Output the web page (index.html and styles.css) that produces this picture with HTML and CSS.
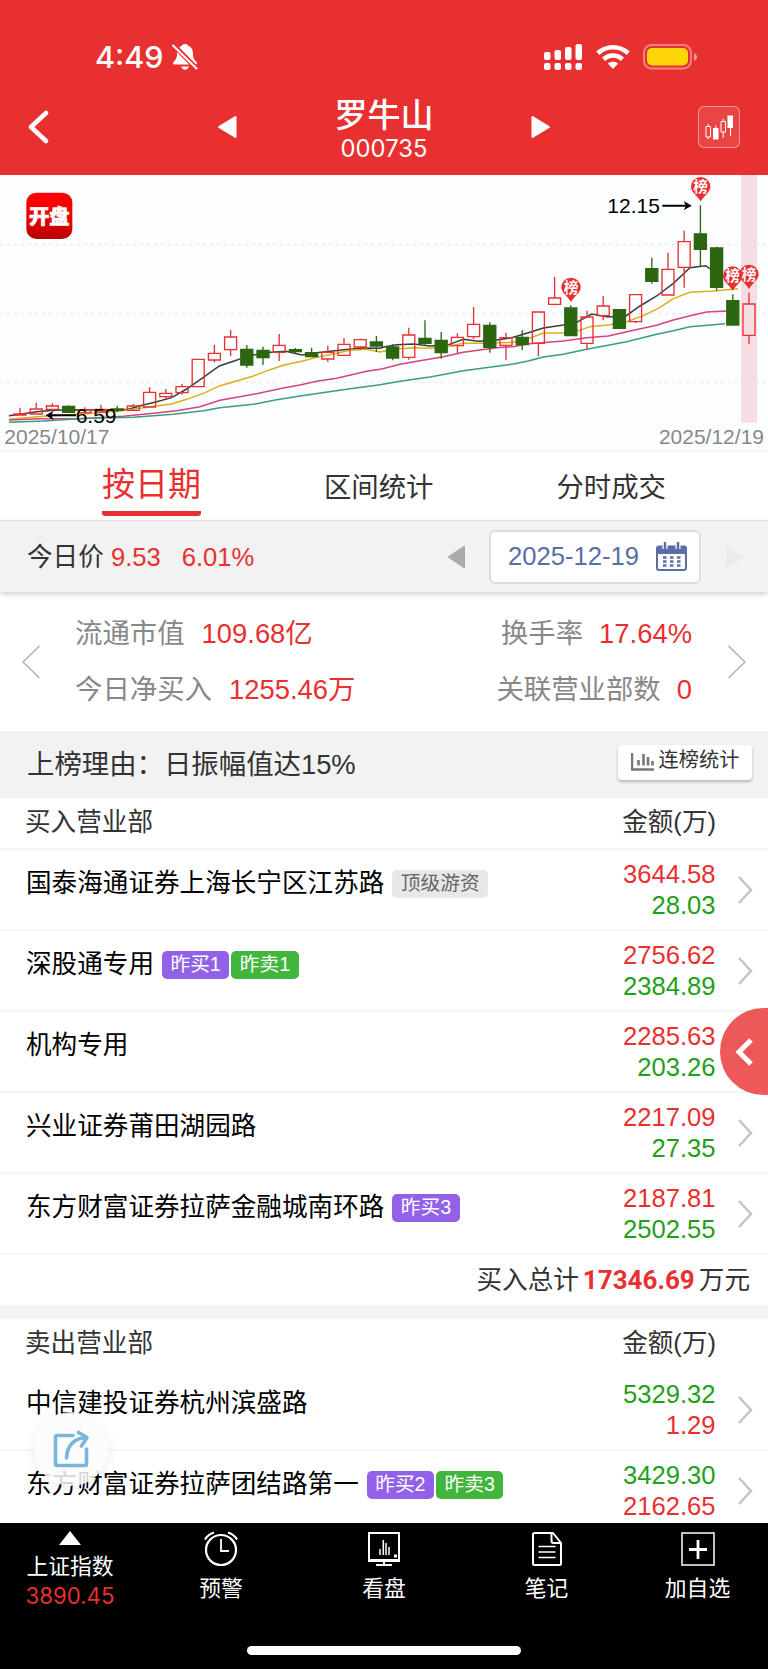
FILE: index.html
```html
<!DOCTYPE html>
<html lang="zh">
<head>
    <meta charset="UTF-8">
    <meta name="viewport" content="width=device-width, initial-scale=1.0">
    <title>罗牛山 000735</title>
    <link rel="stylesheet" href="styles.css">
</head>
<body>
    <div class="top">
        <div class="status-bar">
            <div class="status-left">
                <span class="clock">4:49</span>
                <svg width="26" height="28" viewBox="0 0 26 28">
                    <path d="M13 1c-1.900 0-3 .8-3.500 2.100C6 4.500 5 7.500 5 11c0 4-1 5.500-3.500 8-1 1.200-.5 2.500 1 2.500h21c1.500 0 2-1.300 1-2.500-2.500-2.500-3.500-4-3.500-8 0-3.500-1-6.500-4.500-7.900C16 1.800 14.900 1 13 1z" fill="#fff"/>
                    <path d="M9 23.500h8c-.6 2-2.100 3.200-4 3.200s-3.400-1.200-4-3.200z" fill="#fff"/>
                    <path d="M0 0.500L26 27" stroke="#e83030" stroke-width="5"/>
                    <path d="M1 2.500L24.500 25.500" stroke="#fff" stroke-width="2" stroke-linecap="round"/>
                </svg>
            </div>
            <div class="status-right">
                <svg width="39" height="28" viewBox="0 0 39 28" fill="#fff">
                    <rect x="0" y="9" width="6.500" height="8" rx="2"/>
                    <rect x="10.500" y="7" width="6.500" height="10" rx="2"/>
                    <rect x="21" y="4" width="6.500" height="13" rx="2"/>
                    <rect x="31.500" y="1" width="6.500" height="16" rx="2"/>
                    <rect x="0" y="20" width="6.500" height="7" rx="2"/>
                    <rect x="10.500" y="20" width="6.500" height="7" rx="2"/>
                    <rect x="21" y="20" width="6.500" height="7" rx="2"/>
                    <rect x="31.500" y="20" width="6.500" height="7" rx="2"/>
                </svg>
                <svg class="wifi" width="34" height="26" viewBox="0 0 34 26" fill="none" stroke="#fff" stroke-width="4.600">
                    <path d="M1.800 9.200C10.500 1.200 23.500 1.200 32.200 9.200"/>
                    <path d="M7.500 15.200c5.600-5 13.400-5 19 0"/>
                    <path d="M17 25l-5.200-5.400c3-2.500 7.400-2.500 10.400 0z" fill="#fff" stroke="none"/>
                </svg>
                <svg width="55" height="26" viewBox="0 0 55 26">
                    <rect x="1" y="1" width="47" height="23.500" rx="7.500" fill="none" stroke="#fff" stroke-opacity=".4" stroke-width="2"/>
                    <rect x="4" y="4" width="41" height="17.500" rx="5" fill="#ffd60a"/>
                    <path d="M51 9c4 1.500 4 6.500 0 8z" fill="#fff" fill-opacity=".5"/>
                </svg>
            </div>
        </div>
        <div class="nav-bar">
            <svg class="back" width="22" height="34" viewBox="0 0 22 34"><path d="M19 3L4 17l15 14" fill="none" stroke="#fff" stroke-width="4.500" stroke-linecap="round" stroke-linejoin="round"/></svg>
            <svg class="prev" width="20" height="24" viewBox="0 0 20 24"><path d="M18.500 2v20L2 12z" fill="#fff" stroke="#fff" stroke-width="2" stroke-linejoin="round"/></svg>
            <div class="title">
                <div class="stock-name">罗牛山</div>
                <div class="stock-code">000735</div>
            </div>
            <svg class="next" width="20" height="24" viewBox="0 0 20 24"><path d="M1.500 2v20L18 12z" fill="#fff" stroke="#fff" stroke-width="2" stroke-linejoin="round"/></svg>
            <div class="kline-btn">
                <svg width="40" height="40" viewBox="0 0 40 40">
                    <g fill="none" stroke="#fff" stroke-width="1">
                        <path d="M7 19.500h4.500v10.500H7zM9.200 17v2.500M9.200 30v2"/>
                        <path d="M22 14.500h4.500v10.500H22zM24.200 12v2.500M24.200 25v6M16.800 18.500v4M31.500 20v9"/>
                    </g>
                    <path d="M14 21h5.500v11.500H14zM28.500 8.500H34V21h-5.500z" fill="#fff"/>
                </svg>
            </div>
        </div>
    </div>

    <svg class="chart" viewBox="0 15 2304 831">
        <defs>
            <linearGradient id="logo-bg" x1="0" y1="0" x2="0" y2="1">
                <stop offset="0" stop-color="#ff0303"/>
                <stop offset=".5" stop-color="#ee0202"/>
                <stop offset="1" stop-color="#b80000"/>
            </linearGradient>
        </defs>
        <g class="grid">
            <path d="M0 224H2304M0 431H2304M0 637H2304"/>
        </g>
        <path d="M0 844.500H2304" stroke="#f0f2f3" stroke-width="4"/>
        <rect x="2223" y="15" width="48" height="743" fill="#f6dde4"/>
        <rect x="79" y="68" width="138" height="139" rx="30" fill="url(#logo-bg)"/>
        <text class="logo-text" x="148" y="162">开盘</text>
        <g class="ma">
            <polyline stroke="#3a3c40" points="27,737 60,733 110,725 160,721 215,719 260,720 352,720 385,718 430,705 470,695 515,683 560,657 610,622 658,588 700,574 740,560 790,548 858,544 905,555 950,548 1032,539 1090,534 1140,535 1155,530 1190,524 1240,522 1290,528 1340,526 1390,508 1435,514 1490,510 1540,502 1585,488 1630,474 1690,465 1730,457 1775,432 1820,440 1875,440 1920,408 1970,378 2020,340 2070,293 2117,287 2140,303"/>
            <polyline stroke="#e0ad14" points="27,748 130,739 260,731 352,724 400,718 450,710 515,702 560,688 610,670 660,647 700,636 760,618 810,599 850,586 905,574 950,562 1000,552 1050,541 1100,538 1140,546 1155,543 1190,537 1240,533 1290,535 1340,530 1390,520 1440,520 1540,517 1585,506 1630,489 1690,489 1730,484 1770,470 1830,464 1880,455 1930,437 1975,415 2020,386 2070,367 2140,363 2214,356"/>
            <polyline stroke="#d9427f" points="27,750 120,746 240,746 370,739 460,730 530,722 600,710 660,691 760,673 850,654 900,645 950,634 1010,625 1100,604 1145,597 1200,583 1260,572 1330,560 1390,547 1490,533 1540,530 1580,522 1690,513 1760,503 1825,498 1880,485 1970,466 2020,450 2070,437 2120,426 2180,423"/>
            <polyline stroke="#3a9e7b" points="27,757 130,753 260,745 400,742 520,733 610,722 660,713 760,703 830,689 900,678 1050,656 1140,644 1200,634 1290,621 1390,602 1540,582 1585,573 1630,561 1690,553 1760,538 1880,515 1970,493 2020,482 2070,470 2175,461"/>
        </g>
        <g id="candles"></g>
        <g id="pins"></g>
        <g fill="none" stroke="#000" stroke-width="6">
            <path d="M1987 107h84M228 736H144"/>
        </g>
        <path d="M2075 107l-24-14 7 14-7 14zM137 736l24-14-7 14 7 14z"/>
        <text class="price-mark" x="1822" y="129">12.15</text>
        <text class="price-mark" x="227" y="760">6.59</text>
        <text class="date-mark" x="13" y="822">2025/10/17</text>
        <text class="date-mark" x="2292" y="822" text-anchor="end">2025/12/19</text>
    </svg>

    <div class="tabs">
        <div class="tab active">按日期</div>
        <div class="tab">区间统计</div>
        <div class="tab">分时成交</div>
    </div>

    <div class="price-bar">
        <div class="price">今日价 <span class="red">9.53</span><span class="red change">6.01%</span></div>
        <div class="date-picker">
            <svg width="18" height="24" viewBox="0 0 18 24"><path d="M17.500 1v22L1 12z" fill="#aaa" stroke="#aaa" stroke-linejoin="round"/></svg>
            <div class="date-box">
                <span>2025-12-19</span>
                <svg width="31" height="29" viewBox="0 0 31 29">
                    <rect x="1" y="4.500" width="29" height="23.500" rx="2" fill="#fff" stroke="#5a6ea5" stroke-width="2"/>
                    <path d="M1 4h29v8H1z" fill="#5a6ea5"/>
                    <path d="M9 1v6M22 1v6" stroke="#fff" stroke-width="5"/>
                    <path d="M9 0v7M22 0v7" stroke="#5a6ea5" stroke-width="2.500"/>
                    <path d="M7 15.500h18M7 19.500h18M7 23.500h18" stroke="#5a6ea5" stroke-width="2.500" stroke-dasharray="3.500 3.500"/>
                </svg>
            </div>
            <svg width="20" height="24" viewBox="0 0 20 24"><path d="M1 1v22l18-11z" fill="#ebebeb"/></svg>
        </div>
    </div>

    <div class="stats">
        <svg width="20" height="36" viewBox="0 0 20 36"><path d="M18.500 2L2 18l16.500 16" fill="none" stroke="#aaa" stroke-width="1.300"/></svg>
        <div class="stats-col">
            <div>流通市值<span class="red">109.68亿</span></div>
            <div>今日净买入<span class="red">1255.46万</span></div>
        </div>
        <div class="stats-col right">
            <div>换手率<span class="red">17.64%</span></div>
            <div>关联营业部数<span class="red">0</span></div>
        </div>
        <svg width="20" height="36" viewBox="0 0 20 36"><path d="M1.500 2L18 18 1.500 34" fill="none" stroke="#aaa" stroke-width="1.300"/></svg>
    </div>

    <div class="reason">
        <div class="reason-text">上榜理由：日振幅值达15%</div>
        <div class="stat-btn">
            <svg width="24" height="18" viewBox="0 0 24 18" stroke="#777" fill="none"><path d="M1 0v16.500h22" stroke-width="2.500"/><path d="M7.500 12.500V7M12.500 12.500V1M17 12.500V4M21.500 12.500V8" stroke-width="2.600"/></svg>
            <span>连榜统计</span>
        </div>
    </div>

    <div class="list-head"><span>买入营业部</span><span>金额(万)</span></div>
    <div class="row">
        <div class="name">国泰海通证券上海长宁区江苏路<span class="tag gray">顶级游资</span></div>
        <div class="amount"><div class="red">3644.58</div><div class="green">28.03</div></div>
        <svg class="arrow" viewBox="0 0 16 30"><path d="M2 2l12 13L2 28"/></svg>
    </div>
    <div class="row">
        <div class="name">深股通专用<span class="tag buy">昨买1</span><span class="tag sell">昨卖1</span></div>
        <div class="amount"><div class="red">2756.62</div><div class="green">2384.89</div></div>
        <svg class="arrow" viewBox="0 0 16 30"><path d="M2 2l12 13L2 28"/></svg>
    </div>
    <div class="row">
        <div class="name">机构专用</div>
        <div class="amount"><div class="red">2285.63</div><div class="green">203.26</div></div>
        <svg class="arrow" viewBox="0 0 16 30"><path d="M2 2l12 13L2 28"/></svg>
    </div>
    <div class="row">
        <div class="name">兴业证券莆田湖园路</div>
        <div class="amount"><div class="red">2217.09</div><div class="green">27.35</div></div>
        <svg class="arrow" viewBox="0 0 16 30"><path d="M2 2l12 13L2 28"/></svg>
    </div>
    <div class="row">
        <div class="name">东方财富证券拉萨金融城南环路<span class="tag buy">昨买3</span></div>
        <div class="amount"><div class="red">2187.81</div><div class="green">2502.55</div></div>
        <svg class="arrow" viewBox="0 0 16 30"><path d="M2 2l12 13L2 28"/></svg>
    </div>
    <div class="total">买入总计<b>17346.69</b>万元</div>

    <div class="list-head sell-head"><span>卖出营业部</span><span>金额(万)</span></div>
    <div class="row">
        <div class="name">中信建投证券杭州滨盛路</div>
        <div class="amount"><div class="green">5329.32</div><div class="red">1.29</div></div>
        <svg class="arrow" viewBox="0 0 16 30"><path d="M2 2l12 13L2 28"/></svg>
    </div>
    <div class="row last">
        <div class="name">东方财富证券拉萨团结路第一<span class="tag buy">昨买2</span><span class="tag sell">昨卖3</span></div>
        <div class="amount"><div class="green">3429.30</div><div class="red">2162.65</div></div>
        <svg class="arrow" viewBox="0 0 16 30"><path d="M2 2l12 13L2 28"/></svg>
    </div>

    <div class="side-btn">
        <svg width="20" height="30" viewBox="0 0 20 30"><path d="M17 3L5 15l12 12" fill="none" stroke="#fff" stroke-width="5"/></svg>
    </div>
    <div class="share-btn">
        <svg width="36" height="38" viewBox="0 0 36 38" fill="none" stroke="#78b6da" stroke-width="3.600" stroke-linecap="round" stroke-linejoin="round">
            <path d="M20 5.500H4q-1.500 0-1.500 1.500v27q0 1.500 1.500 1.500h28q1.500 0 1.500-1.500V19"/>
            <path d="M13.500 28C14 17 20 8 33.500 7.500M25.500 2.500l8.500 5-5.500 8.500"/>
        </svg>
    </div>

    <div class="bottom">
        <div class="bottom-item index">
            <svg width="22" height="14" viewBox="0 0 22 14"><path d="M11 0l11 14H0z" fill="#fff"/></svg>
            <div>上证指数</div>
            <div class="index-value">3890.45</div>
        </div>
        <div class="bottom-item">
            <svg width="36" height="36" viewBox="0 0 36 36" fill="none" stroke="#fff" stroke-width="2.200">
                <circle cx="18" cy="19" r="15"/>
                <path d="M18 8v12h8" stroke-width="1.800"/>
                <path d="M2 8.500Q5 3.500 11 1.500M34 8.500Q31 3.500 25 1.500"/>
            </svg>
            <div>预警</div>
        </div>
        <div class="bottom-item">
            <svg width="36" height="36" viewBox="0 0 36 36" fill="none" stroke="#fff" stroke-width="2">
                <path d="M3 2h30v28H3z"/>
                <path d="M2 29.500h32" stroke-width="3"/>
                <path d="M18 30v4M10 34h16"/>
                <path d="M14 18v6M17.300 9v15M20 12v12M23 16v8" stroke-width="1.500"/>
                <path d="M28 25h3" stroke-width="3"/>
            </svg>
            <div>看盘</div>
        </div>
        <div class="bottom-item">
            <svg width="36" height="36" viewBox="0 0 36 36" fill="none" stroke="#fff" stroke-width="2" stroke-linejoin="round">
                <path d="M24 2H5.500Q4 2 4 3.500v29Q4 34 5.500 34h25q1.500 0 1.500-1.500V12zM22.500 2v8q0 2 2 2h7.500"/>
                <path d="M9.500 15.500h17M9.500 21h17M9.500 26.500h17" stroke-width="1.500"/>
            </svg>
            <div>笔记</div>
        </div>
        <div class="bottom-item">
            <svg width="36" height="36" viewBox="0 0 36 36" fill="none" stroke="#fff">
                <path d="M2 2h32v32H2z" stroke-width="1.500"/>
                <path d="M18 9v19M9 18.500h18" stroke-width="2.800"/>
            </svg>
            <div>加自选</div>
        </div>
        <div class="home-bar"></div>
    </div>

    <script>
        // 涨跌, 最高, 实体上, 实体下, 最低
        const data = [
            [1,713,732,735,735],[1,698,717,732,732],[1,700,708,718,722],[0,706,709,727,727],[1,712,720,728,728],
            [1,704,718,726,726],[0,708,717,721,727],[1,702,708,721,721],[1,652,667,711,711],[1,657,670,680,686],
            [1,642,650,668,674],[1,568,568,650,650],[1,525,550,570,577],[1,480,501,539,559],[0,525,538,585,593],
            [0,530,541,563,585],[1,492,526,547,573],[0,534,539,545,550],[0,533,548,560,560],[1,527,547,567,575],
            [1,504,523,556,556],[1,506,509,531,540],[0,498,516,528,546],[0,523,531,564,571],[1,473,495,562,569],
            [0,451,505,520,524],[0,486,511,548,566],[1,490,502,527,550],[1,411,463,500,507],[0,457,466,532,548],
            [1,488,503,526,571],[0,481,502,524,540],[1,426,426,520,559],[1,321,384,403,403],[0,406,414,497,497],
            [1,422,441,520,538],[1,378,408,437,451],[0,417,419,475,475],[1,374,374,455,459],[0,263,296,334,341],
            [1,248,298,375,375],[1,182,215,292,353],[0,106,192,238,290],[0,230,234,352,362],[0,373,392,465,465],
            [1,368,402,496,523]
        ];
        let html = '';
        data.forEach((d, i) => {
            const x = 60 + i * 48.6;
            html += `<path class="${d[0] ? 'up' : 'down'}" d="M${x} ${d[1]}V${d[2]}M${x} ${d[3]}V${d[4]}M${x - 18} ${d[2]}h36V${d[3]}h-36z"/>`;
        });
        document.getElementById('candles').innerHTML = html;

        // 上榜标记
        const pins = [[2102, 50], [1713, 352], [2198, 318], [2247, 313]];
        document.getElementById('pins').innerHTML = pins.map(p =>
            `<g transform="translate(${p[0]} ${p[1]})"><path d="M-29 0a29 29 0 1 1 58 0c0 16-16 24-29 44c-13-20-29-28-29-44z" fill="#e83030"/><text class="pin-text" y="16">榜</text></g>`
        ).join('');
    </script>
</body>
</html>
```
FILE: styles.css
```css
html, body {
    margin: 0;
    padding: 0;
}
body {
    position: relative;
    width: 768px;
    height: 1669px;
    overflow: hidden;
    font-family: "Liberation Sans", "Noto Sans CJK SC", sans-serif;
    font-size: 25.6px;
    color: #333;
    background-color: #fff;
}
svg {
    display: block;
    flex-shrink: 0;
}
.red {
    color: #e83030;
}
.green {
    color: #1fa01a;
}
.top {
    height: 175px;
    background-color: #e83030;
    color: #fff;
}
.status-bar {
    display: flex;
    justify-content: space-between;
    align-items: center;
    height: 80px;
    padding: 33px 70px 0 95px;
    box-sizing: border-box;
}
.status-left, .status-right {
    display: flex;
    align-items: center;
}
.clock {
    font-family: Inter, sans-serif;
    font-size: 30.5px;
    font-weight: 500;
    margin-right: 8px;
}
.wifi {
    margin: 0 13px;
}
.nav-bar {
    display: flex;
    align-items: center;
    height: 93px;
    padding: 0 28px 2px 27px;
}
.prev {
    margin-left: 168px;
}
.title {
    width: 294px;
    padding-top: 5px;
    text-align: center;
}
.stock-name {
    font-size: 33px;
    font-weight: 500;
    line-height: 40px;
}
.stock-code {
    font-family: Inter, sans-serif;
    font-size: 23.8px;
    line-height: 26px;
}
.kline-btn {
    margin-left: auto;
    border: 1px solid rgba(255, 255, 255, 0.45);
    border-radius: 6px;
    background-color: rgba(255, 255, 255, 0.1);
}
.chart {
    width: 768px;
    height: 277px;
    background-color: #fcfdff;
}
.grid {
    fill: none;
    stroke: #e2e4ea;
    stroke-width: 3;
    stroke-dasharray: 9 12;
}
.ma {
    fill: none;
    stroke-width: 4.5;
}
.up {
    fill: none;
    stroke: #e83030;
    stroke-width: 4;
}
.down {
    fill: #2c6610;
    stroke: #2c6610;
    stroke-width: 4;
}
.logo-text {
    font-size: 61px;
    font-weight: 900;
    fill: #fff;
    stroke: #fff;
    stroke-width: 2;
    text-anchor: middle;
}
.pin-text {
    font-size: 44px;
    font-weight: bold;
    fill: #fff;
    text-anchor: middle;
}
.price-mark {
    font-size: 63px;
    fill: #000;
}
.date-mark {
    font-size: 63px;
    fill: #888;
}
.tabs {
    display: flex;
    justify-content: space-between;
    align-items: center;
    height: 69px;
    padding: 0 102px;
    box-sizing: border-box;
    border-bottom: 1px solid #e8e8e8;
}
.tab {
    padding-top: 3px;
    font-size: 27.4px;
    line-height: 60px;
}
.tab.active {
    padding-top: 7px;
    margin-bottom: 5px;
    font-size: 33px;
    line-height: 52px;
    color: #e83030;
    border-bottom: 5px solid #e83030;
    border-radius: 3px;
}
.price-bar {
    display: flex;
    justify-content: space-between;
    align-items: center;
    height: 71px;
    padding: 0 23px 0 27px;
    background-color: #f2f2f2;
    box-shadow: 0 2px 6px rgba(0, 0, 0, 0.2);
}
.price {
    padding-bottom: 4px;
}
.change {
    margin-left: 21px;
}
.date-picker {
    display: flex;
    align-items: center;
    gap: 24px;
}
.date-box {
    display: flex;
    align-items: center;
    justify-content: space-between;
    width: 212px;
    height: 54px;
    padding: 0 12px 0 17px;
    box-sizing: border-box;
    border: 2px solid #ddd;
    border-radius: 6px;
    background-color: #fff;
    color: #5a6ea5;
}
.stats {
    display: flex;
    align-items: center;
    height: 139px;
    padding: 0 21px;
    font-size: 27.4px;
    color: #888;
}
.stats-col {
    flex: 1;
    padding-left: 34px;
    line-height: 56px;
}
.stats-col.right {
    padding: 0 35px 0 0;
    text-align: right;
}
.stats-col span {
    margin-left: 17px;
}
.stats-col.right span {
    margin-left: 16px;
}
.reason {
    display: flex;
    justify-content: space-between;
    align-items: center;
    height: 67px;
    padding: 0 16px 0 27px;
    background-color: #f2f2f2;
    font-size: 27.4px;
}
.reason-text {
    padding-bottom: 6px;
}
.stat-btn {
    display: flex;
    align-items: center;
    justify-content: center;
    gap: 4px;
    width: 134px;
    height: 35px;
    margin-bottom: 5px;
    border-radius: 4px;
    background-color: #fff;
    box-shadow: 0 2px 3px rgba(0, 0, 0, 0.25);
    font-size: 20.2px;
    line-height: 31px;
}
.stat-btn span {
    padding-bottom: 3px;
}
.list-head {
    display: flex;
    justify-content: space-between;
    height: 52px;
    padding: 0 52px 0 25px;
    box-sizing: border-box;
    border-bottom: 2px solid #f5f5f5;
    line-height: 49px;
}
.row {
    display: flex;
    height: 81px;
    padding: 0 15px 0 26px;
    box-sizing: border-box;
    border-bottom: 2px solid #f5f5f5;
}
.name {
    display: flex;
    flex: 1;
    align-items: center;
    height: 61px;
    color: #000;
}
.tag {
    height: 28px;
    padding: 0 8.5px;
    margin: 6px 0 0 2px;
    border-radius: 5px;
    font-size: 19.7px;
    line-height: 27px;
    color: #fff;
}
.tag:first-child {
    margin-left: 8px;
}
.tag.gray {
    background-color: #e8e8e8;
    color: #666;
}
.tag.buy {
    background-color: #9360e8;
}
.tag.sell {
    background-color: #42b53c;
}
.amount {
    padding-top: 9px;
    margin-right: 21.5px;
    text-align: right;
    line-height: 31px;
}
.arrow {
    width: 16px;
    height: 30px;
    margin-top: 25px;
    fill: none;
    stroke: #c4c4c4;
    stroke-width: 2.5;
}
.total {
    height: 50px;
    padding-right: 18px;
    line-height: 51px;
    text-align: right;
    border-bottom: 14px solid #f2f2f2;
}
.total b {
    margin: 0 4px;
    font-family: Roboto, sans-serif;
    font-size: 26px;
    color: #e83030;
}
.sell-head {
    height: 51px;
    border-bottom-color: #fff;
}
.row.last {
    height: 73px;
    border: none;
}
.side-btn {
    position: absolute;
    right: 0;
    top: 1008px;
    display: flex;
    align-items: center;
    justify-content: center;
    width: 48px;
    height: 87px;
    border-radius: 44px 0 0 44px;
    background-color: rgba(235, 75, 75, 0.92);
}
.share-btn {
    position: absolute;
    left: 34px;
    top: 1412px;
    display: flex;
    align-items: center;
    justify-content: center;
    width: 74px;
    height: 74px;
    border-radius: 50%;
    background-color: rgba(252, 252, 252, 0.85);
    box-shadow: 0 2px 12px rgba(0, 0, 0, 0.08);
}
.bottom {
    display: grid;
    grid-template-columns: 140px 162px 164px 161px 141px;
    position: absolute;
    left: 0;
    top: 1523px;
    width: 768px;
    height: 146px;
    background-color: #000;
    color: #fff;
    font-size: 21.8px;
}
.bottom-item {
    display: flex;
    flex-direction: column;
    align-items: center;
    gap: 7px;
    padding-top: 8px;
    line-height: 30px;
}
.bottom-item.index {
    gap: 0;
}
.bottom-item.index svg {
    margin-bottom: 7px;
}
.index-value {
    font-family: Inter, sans-serif;
    font-size: 22.2px;
    color: #e83030;
    line-height: 27px;
}
.home-bar {
    position: absolute;
    left: 247px;
    bottom: 14px;
    width: 274px;
    height: 9px;
    border-radius: 5px;
    background-color: #fff;
}
```
